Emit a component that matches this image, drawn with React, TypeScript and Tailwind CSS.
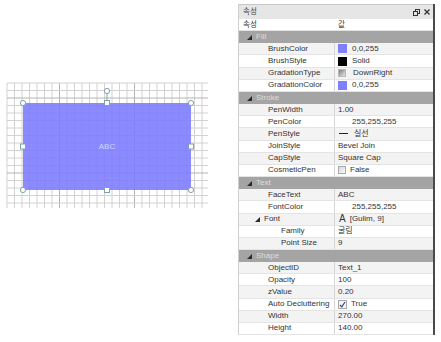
import React from "react";

type Prop = {
  kind: "group" | "prop";
  name: string;
  depth?: number;
  value?: string;
  icon?: "swatch" | "grad" | "line" | "check" | "checked" | "font";
  color?: string;
};

const rows: Prop[] = [
  { kind: "group", name: "Fill" },
  { kind: "prop", name: "BrushColor", value: "0,0,255", icon: "swatch", color: "#8080ff" },
  { kind: "prop", name: "BrushStyle", value: "Solid", icon: "swatch", color: "#000000" },
  { kind: "prop", name: "GradationType", value: "DownRight", icon: "grad" },
  { kind: "prop", name: "GradationColor", value: "0,0,255", icon: "swatch", color: "#8080ff" },
  { kind: "group", name: "Stroke" },
  { kind: "prop", name: "PenWidth", value: "1.00" },
  { kind: "prop", name: "PenColor", value: "255,255,255", icon: "swatch", color: "#ffffff" },
  { kind: "prop", name: "PenStyle", value: "실선", icon: "line" },
  { kind: "prop", name: "JoinStyle", value: "Bevel Join" },
  { kind: "prop", name: "CapStyle", value: "Square Cap" },
  { kind: "prop", name: "CosmeticPen", value: "False", icon: "check" },
  { kind: "group", name: "Text" },
  { kind: "prop", name: "FaceText", value: "ABC" },
  { kind: "prop", name: "FontColor", value: "255,255,255", icon: "swatch", color: "#ffffff" },
  { kind: "group", name: "Font", depth: 1, value: "[Gulim, 9]", icon: "font" },
  { kind: "prop", name: "Family", depth: 2, value: "굴림" },
  { kind: "prop", name: "Point Size", depth: 2, value: "9" },
  { kind: "group", name: "Shape" },
  { kind: "prop", name: "ObjectID", value: "Text_1" },
  { kind: "prop", name: "Opacity", value: "100" },
  { kind: "prop", name: "zValue", value: "0.20" },
  { kind: "prop", name: "Auto Decluttering", value: "True", icon: "checked" },
  { kind: "prop", name: "Width", value: "270.00" },
  { kind: "prop", name: "Height", value: "140.00" },
];

function Tri({ light }: { light?: boolean }) {
  return (
    <svg width="5" height="5" viewBox="0 0 5 5" className="shrink-0">
      <polygon points="5,0 5,5 0,5" fill={light ? "#3a3a3a" : "#2a2a2a"} />
    </svg>
  );
}

function ValueIcon({ p }: { p: Prop }) {
  switch (p.icon) {
    case "swatch":
      return <span className="ml-[2px] mr-[5px] h-[9px] w-[9px] shrink-0" style={{ background: p.color }} />;
    case "grad":
      return (
        <span className="ml-[2px] mr-[7px] h-[8px] w-[8px] shrink-0 border border-[#b8b8b8] bg-[linear-gradient(135deg,#7a7a7a,#e8e8e8)]" />
      );
    case "line":
      return <span className="ml-[3px] mr-[6px] h-[1px] w-[9px] shrink-0 bg-[#222]" />;
    case "check":
      return <span className="ml-[2px] mr-[4px] h-[8px] w-[8px] shrink-0 border border-[#a8a8a8] bg-[linear-gradient(135deg,#d8d8d8,#fafafa)]" />;
    case "checked":
      return (
        <span className="ml-[2px] mr-[4px] flex h-[9px] w-[9px] shrink-0 items-center justify-center border border-[#a8a8a8] bg-[#f4f4f4]">
          <svg width="7" height="7" viewBox="0 0 7 7">
            <polyline points="1,4 2.8,5.8 6,1" fill="none" stroke="#2a3f8f" strokeWidth="1.1" />
          </svg>
        </span>
      );
    case "font":
      return <span className="ml-[3px] mr-[4px] text-[10px] leading-none text-[#333]">A</span>;
    default:
      return null;
  }
}

function Canvas() {
  const cell = 7.5;
  const w = 201;
  const h = 125;
  const vs = Array.from({ length: Math.floor(w / cell) + 1 }, (_, i) => i * cell);
  const hs = Array.from({ length: Math.floor(h / cell) + 1 }, (_, i) => i * cell);
  return (
    <svg width="204" height="128" viewBox="-1 -1 204 128">
      {vs.map((x, i) => (
        <line key={"v" + i} x1={x} y1={0} x2={x} y2={h} stroke={i % 10 === 7 ? "#b4b4b4" : "#d2d2d2"} strokeWidth="1" />
      ))}
      {hs.map((y, i) => (
        <line key={"h" + i} x1={0} y1={y} x2={w} y2={y} stroke={i % 10 === 2 ? "#b4b4b4" : "#d2d2d2"} strokeWidth="1" />
      ))}
      <rect x="16" y="20" width="168" height="87" fill="#7b7bff" opacity="0.88" />
      <text x="100" y="66" textAnchor="middle" fontSize="8" fill="#d4d4ff" fontFamily="Liberation Sans, sans-serif">
        ABC
      </text>
      <line x1="100" y1="10.5" x2="100" y2="17.5" stroke="#7fa3ad" strokeWidth="1" />
      {[
        [16, 20],
        [184, 20],
        [16, 107],
        [184, 107],
        [100, 8],
      ].map(([cx, cy], i) => (
        <circle key={"c" + i} cx={cx} cy={cy} r="2.6" fill="#ffffff" stroke="#7fa3ad" strokeWidth="1" />
      ))}
      {[
        [100, 20],
        [16, 63.5],
        [184, 63.5],
        [100, 107],
      ].map(([cx, cy], i) => (
        <rect key={"s" + i} x={cx - 2.5} y={cy - 2.5} width="5" height="5" fill="#ffffff" stroke="#7fa3ad" strokeWidth="1" />
      ))}
    </svg>
  );
}

export default function App() {
  let stripe = 0;
  return (
    <div
      className="flex h-[342px] w-[441px] overflow-hidden bg-white text-[8px] text-[#333]"
      style={{ fontFamily: '"Liberation Sans", "Noto Sans CJK KR", sans-serif' }}
    >
      <div className="w-[238px] shrink-0 pl-[6px] pt-[82px]">
        <Canvas />
      </div>

      <div className="mt-[4px] flex h-[331px] w-[197px] shrink-0 flex-col border-l border-r-2 border-l-[#cfcfcf] border-r-[#4a4a4a]">
        <div className="flex h-[15px] shrink-0 items-center justify-between border-t border-[#c8c8c8] bg-[#e6e6e6] pl-[4px] pr-[3px]">
          <span className="text-[7.5px] text-[#444]">속성</span>
          <div className="flex items-center gap-[4px]">
            <svg width="7" height="7" viewBox="0 0 7 7">
              <rect x="2.5" y="0.5" width="4" height="4" fill="none" stroke="#333" strokeWidth="1" />
              <rect x="0.5" y="2.5" width="4" height="4" fill="#e6e6e6" stroke="#333" strokeWidth="1" />
            </svg>
            <svg width="6" height="6" viewBox="0 0 6 6">
              <path d="M0.5 0.5L5.5 5.5M5.5 0.5L0.5 5.5" stroke="#333" strokeWidth="1.3" />
            </svg>
          </div>
        </div>

        <div className="flex h-[12.16px] shrink-0 items-center border-b border-[#e2e2e2] bg-white">
          <div className="w-[96px] shrink-0 pl-[4px] text-[7.5px]">속성</div>
          <div className="pl-[3px] text-[7.5px]">값</div>
        </div>

        {rows.map((p, i) => {
          if (p.kind === "group" && !p.depth) {
            stripe = 0;
            return (
              <div key={i} className="flex h-[12.16px] shrink-0 items-center bg-[#a4a4a4] pl-[8px]">
                <Tri />
                <span className="ml-[4px] text-[#dedede]">{p.name}</span>
              </div>
            );
          }
          const shade = stripe % 2 === 0;
          stripe++;
          const depth = p.depth ?? 0;
          const pad = p.kind === "group" ? 16 : depth === 2 ? 42 : 29;
          return (
            <div
              key={i}
              className={`flex h-[12.16px] shrink-0 items-center border-b border-[#e4e4e4] ${shade ? "bg-[#f3f3f3]" : "bg-white"}`}
            >
              <div
                className="flex h-full w-[96px] shrink-0 items-center border-r border-[#d6d6d6] whitespace-nowrap"
                style={{ paddingLeft: pad }}
              >
                {p.kind === "group" && <Tri />}
                <span className={p.kind === "group" ? "ml-[4px]" : ""}>{p.name}</span>
              </div>
              <div className="flex items-center pl-[1px] whitespace-nowrap">
                <ValueIcon p={p} />
                <span className={p.icon ? "" : "ml-[2px]"}>{p.value}</span>
              </div>
            </div>
          );
        })}
        <div className="flex-1 bg-white" />
      </div>
    </div>
  );
}
